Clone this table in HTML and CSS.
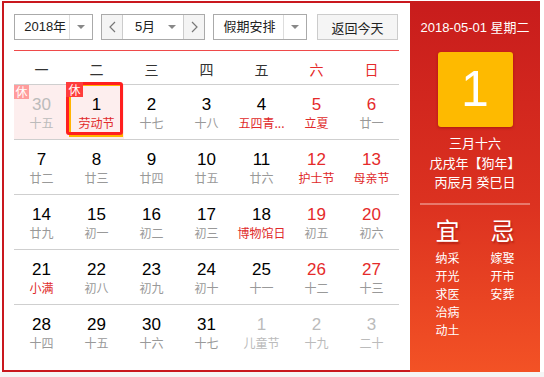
FILE: index.html
```html
<!DOCTYPE html>
<html lang="zh-CN">
<head>
<meta charset="utf-8">
<title>万年历</title>
<link rel="stylesheet" href="styles.css">
</head>
<body>
<div class="cal">
  <div class="main">
    <div class="toolbar">
      <div class="sel sel-year">
        <span class="sel-text">2018年</span>
        <span class="sel-arrow"><i class="tri"></i></span>
      </div>
      <div class="month-group">
        <span class="nav-btn"><svg width="7" height="12" viewBox="0 0 7 12"><polyline points="6,1 1,6 6,11" fill="none" stroke="#777" stroke-width="1.2"/></svg></span>
        <span class="sel-text month-text">5月</span>
        <span class="sel-arrow month-arrow"><i class="tri"></i></span>
        <span class="nav-btn nav-next"><svg width="7" height="12" viewBox="0 0 7 12"><polyline points="1,1 6,6 1,11" fill="none" stroke="#777" stroke-width="1.2"/></svg></span>
      </div>
      <div class="sel sel-holiday">
        <span class="sel-text">假期安排</span>
        <span class="sel-arrow"><i class="tri"></i></span>
      </div>
      <div class="today-btn">返回今天</div>
    </div>
    <div class="week-head">
      <span>一</span><span>二</span><span>三</span><span>四</span><span>五</span><span class="we">六</span><span class="we">日</span>
    </div>
    <div class="row">
      <div class="cell other holiday"><i class="badge badge-faded">休</i><b>30</b><em>十五</em></div>
      <div class="cell holiday sel-day"><i class="badge">休</i><b>1</b><em class="fest">劳动节</em></div>
      <div class="cell"><b>2</b><em>十七</em></div>
      <div class="cell"><b>3</b><em>十八</em></div>
      <div class="cell"><b>4</b><em class="fest">五四青...</em></div>
      <div class="cell we"><b>5</b><em class="fest">立夏</em></div>
      <div class="cell we"><b>6</b><em>廿一</em></div>
    </div>
    <div class="row">
      <div class="cell"><b>7</b><em>廿二</em></div>
      <div class="cell"><b>8</b><em>廿三</em></div>
      <div class="cell"><b>9</b><em>廿四</em></div>
      <div class="cell"><b>10</b><em>廿五</em></div>
      <div class="cell"><b>11</b><em>廿六</em></div>
      <div class="cell we"><b>12</b><em class="fest">护士节</em></div>
      <div class="cell we"><b>13</b><em class="fest">母亲节</em></div>
    </div>
    <div class="row">
      <div class="cell"><b>14</b><em>廿九</em></div>
      <div class="cell"><b>15</b><em>初一</em></div>
      <div class="cell"><b>16</b><em>初二</em></div>
      <div class="cell"><b>17</b><em>初三</em></div>
      <div class="cell"><b>18</b><em class="fest">博物馆日</em></div>
      <div class="cell we"><b>19</b><em>初五</em></div>
      <div class="cell we"><b>20</b><em>初六</em></div>
    </div>
    <div class="row">
      <div class="cell"><b>21</b><em class="fest">小满</em></div>
      <div class="cell"><b>22</b><em>初八</em></div>
      <div class="cell"><b>23</b><em>初九</em></div>
      <div class="cell"><b>24</b><em>初十</em></div>
      <div class="cell"><b>25</b><em>十一</em></div>
      <div class="cell we"><b>26</b><em>十二</em></div>
      <div class="cell we"><b>27</b><em>十三</em></div>
    </div>
    <div class="row">
      <div class="cell"><b>28</b><em>十四</em></div>
      <div class="cell"><b>29</b><em>十五</em></div>
      <div class="cell"><b>30</b><em>十六</em></div>
      <div class="cell"><b>31</b><em>十七</em></div>
      <div class="cell other"><b>1</b><em>儿童节</em></div>
      <div class="cell other"><b>2</b><em>十九</em></div>
      <div class="cell other"><b>3</b><em>二十</em></div>
    </div>
  </div>
  <div class="panel">
    <div class="p-date">2018-05-01 星期二</div>
    <div class="p-day">1</div>
    <div class="p-lunar">
      <div>三月十六</div>
      <div>戊戌年【狗年】</div>
      <div>丙辰月 癸巳日</div>
    </div>
    <div class="p-line"></div>
    <div class="p-yiji">
      <div class="p-col">
        <div class="p-title">宜</div>
        <div>纳采</div><div>开光</div><div>求医</div><div>治病</div><div>动土</div>
      </div>
      <div class="p-col">
        <div class="p-title">忌</div>
        <div>嫁娶</div><div>开市</div><div>安葬</div>
      </div>
    </div>
  </div>
</div>
<div class="foot"></div>
</body>
</html>
```

FILE: styles.css
```css
* { box-sizing: border-box; }
html, body { margin: 0; padding: 0; background: #fff; }
body {
  font-family: "Liberation Sans", "Noto Sans CJK SC", sans-serif;
  color: #333;
  width: 544px;
  height: 377px;
  overflow: hidden;
}
.cal {
  display: flex;
  width: 538px;
  height: 371px;
  margin: 1px 0 0 2px;
}
.main {
  width: 408px;
  height: 371px;
  border: 2px solid #c9181e;
  border-right: 0;
  padding: 11px 11px 0 10px;
}
.toolbar {
  display: flex;
  height: 26px;
  font-size: 13px;
}
.sel {
  display: flex;
  height: 26px;
  border: 1px solid #aaa;
  background: #fff;
}
.sel-text {
  display: flex;
  align-items: center;
  justify-content: center;
  color: #222;
  line-height: 24px;
}
.sel-arrow {
  display: flex;
  align-items: center;
  justify-content: center;
  border-left: 1px solid #ddd;
}
.tri {
  display: block;
  width: 0;
  height: 0;
  border-left: 4px solid transparent;
  border-right: 4px solid transparent;
  border-top: 4px solid #888;
}
.sel-year { width: 79px; }
.sel-year .sel-text { width: 55px; padding-left: 6px; }
.sel-year .sel-arrow { width: 23px; }
.month-group {
  display: flex;
  width: 104px;
  height: 26px;
  margin-left: 8px;
  border: 1px solid #aaa;
}
.nav-btn {
  display: flex;
  align-items: center;
  justify-content: center;
  width: 21px;
  background: #f4f4f4;
  border-right: 1px solid #ccc;
}
.nav-next { border-right: 0; border-left: 1px solid #ccc; }
.month-text { width: 38px; padding-left: 6px; }
.month-arrow { width: 22px; border-left: 0; }
.sel-holiday { width: 94px; margin-left: 8px; }
.sel-holiday .sel-text { width: 70px; padding-left: 2px; }
.sel-holiday .sel-arrow { width: 23px; }
.today-btn {
  width: 81px;
  height: 26px;
  margin-left: 10px;
  border: 1px solid #ccc;
  background: #f5f5f5;
  color: #222;
  display: flex;
  align-items: center;
  justify-content: center;
}
.week-head {
  display: grid;
  grid-template-columns: repeat(7, 55px);
  height: 34px;
  margin-top: 10px;
  border-top: 1px solid #ef4a4a;
  font-family: "Noto Sans CJK SC", sans-serif;
  font-size: 14px;
  color: #333;
}
.week-head span {
  display: flex;
  align-items: center;
  justify-content: center;
  line-height: 20px;
  padding-top: 2px;
}
.week-head .we { color: #e52a2a; }
.row {
  display: grid;
  grid-template-columns: repeat(7, 55px);
  height: 55px;
  border-top: 1px solid #cfcfcf;
}
.cell {
  position: relative;
  display: flex;
  flex-direction: column;
  align-items: center;
  padding-top: 11px;
}
.cell b {
  font-weight: normal;
  font-size: 17px;
  line-height: 18px;
  color: #000;
}
.cell em {
  font-style: normal;
  font-family: "Noto Sans CJK SC", sans-serif;
  font-size: 12px;
  line-height: 18px;
  color: #999;
  white-space: nowrap;
}
.cell.we b { color: #e52a2a; }
.cell em.fest { color: #e02a2a; }
.cell.other b, .cell.other em { color: #bbb; }
.holiday { background: #fdeeee; }
.badge {
  position: absolute;
  left: 0;
  top: 0;
  width: 15px;
  height: 14px;
  font-style: normal;
  font-family: "Noto Sans CJK SC", sans-serif;
  font-size: 12px;
  line-height: 14px;
  text-align: center;
  color: #fff;
  background: #f33;
  z-index: 3;
}
.badge-faded { background: #ff9c9c; }
.sel-day::before {
  content: "";
  position: absolute;
  left: 0; top: -1px; right: 1px; bottom: 2px;
  border: 2px solid #ffb400;
}
.sel-day::after {
  content: "";
  position: absolute;
  left: -3px; top: -3px; right: 1px; bottom: 4px;
  border: 3px solid #ff1f1f;
  border-radius: 3px;
  z-index: 2;
}
.sel-day .badge { left: -3px; top: -3px; width: 17px; height: 15px; line-height: 15px; background: #ff3c3c; }
.panel {
  width: 130px;
  height: 371px;
  background: linear-gradient(to bottom, #c81c1c 0%, #dc3220 55%, #f35225 100%);
  color: #fff;
  font-family: "Liberation Sans", "Noto Sans CJK SC", sans-serif;
  padding: 17px 10px 0;
  text-align: center;
}
.p-date {
  font-size: 13px;
  line-height: 20px;
  white-space: nowrap;
}
.p-day {
  width: 75px;
  height: 75px;
  margin: 14px auto 0;
  background: #feba00;
  border-radius: 3px;
  box-shadow: 0 1px 3px rgba(120, 0, 0, 0.45);
  font-size: 50px;
  line-height: 75px;
  color: #fff;
}
.p-lunar {
  margin-top: 6px;
  font-family: "Noto Sans CJK SC", sans-serif;
  font-size: 13px;
  line-height: 19.5px;
  white-space: nowrap;
}
.p-line {
  height: 2px;
  margin-top: 11px;
  background: rgba(255, 255, 255, 0.35);
}
.p-yiji {
  display: grid;
  grid-template-columns: 55px 55px;
  margin-top: 11px;
  font-family: "Noto Sans CJK SC", sans-serif;
  font-size: 12px;
  line-height: 18px;
}
.p-title {
  font-size: 24px;
  line-height: 28px;
  margin-bottom: 5px;
  text-shadow: 1px 2px 2px rgba(120, 0, 0, 0.45);
}
.foot {
  height: 5px;
  background: #f5f5f5;
}
```
